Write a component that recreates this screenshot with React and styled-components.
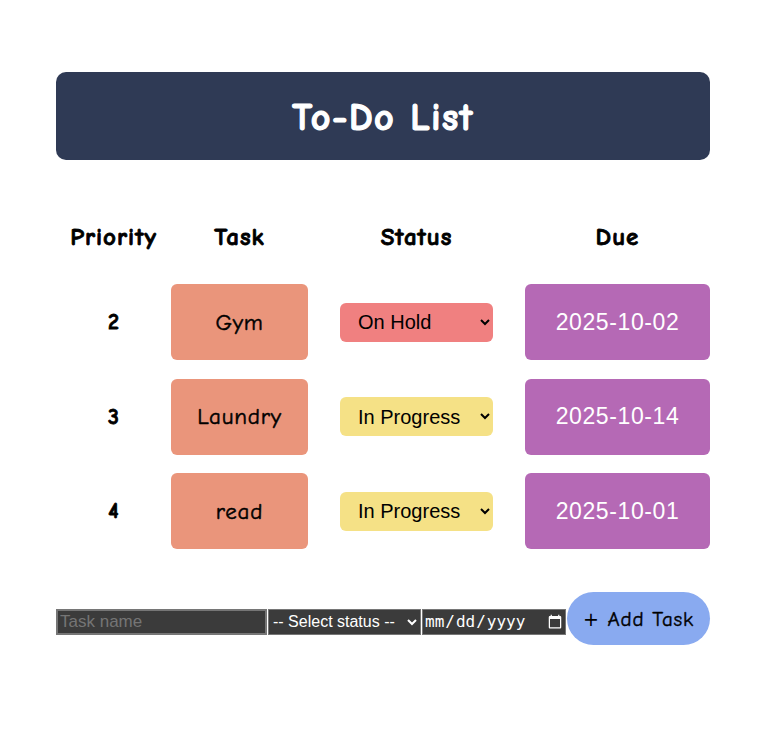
import React, { useState } from "react";
import styled, { createGlobalStyle } from "styled-components";

const comic = `"Comic Sans MS", "Comic Neue", "DejaVu Sans", sans-serif`;
const sans = `"Liberation Sans", Arial, sans-serif`;

const GlobalStyle = createGlobalStyle`
  body {
    margin: 0;
    background: #fff;
    font-family: ${comic};
  }
`;

const statusColors = {
  "On Hold": "#f08080",
  "In Progress": "#f5e186",
  "Done": "#90ee90",
  "Not Started": "#d3d3d3"
};

const initialTasks = [
  { priority: 2, name: "Gym", status: "On Hold", due: "2025-10-02" },
  { priority: 3, name: "Laundry", status: "In Progress", due: "2025-10-14" },
  { priority: 4, name: "read", status: "In Progress", due: "2025-10-01" }
];

export default function App() {
  const [tasks, setTasks] = useState(initialTasks);

  const changeStatus = (idx, value) => {
    setTasks(tasks.map((t, i) => (i === idx ? { ...t, status: value } : t)));
  };

  return (
    <>
      <GlobalStyle />
      <Page>
        <Banner>
          <Title>To-Do List</Title>
        </Banner>
        <HeadRow>
          <HeadCell>Priority</HeadCell>
          <HeadCell>Task</HeadCell>
          <HeadCell>Status</HeadCell>
          <HeadCell>Due</HeadCell>
        </HeadRow>
        <Rows>
          {tasks.map((task, idx) => (
            <Row key={task.name}>
              <Priority>{task.priority}</Priority>
              <TaskCell>{task.name}</TaskCell>
              <StatusCell>
                <StatusSelect
                  $bg={statusColors[task.status]}
                  value={task.status}
                  onChange={(e) => changeStatus(idx, e.target.value)}
                >
                  <option>Not Started</option>
                  <option>In Progress</option>
                  <option>On Hold</option>
                  <option>Done</option>
                </StatusSelect>
              </StatusCell>
              <DueCell>{task.due}</DueCell>
            </Row>
          ))}
        </Rows>
        <Form onSubmit={(e) => e.preventDefault()}>
          <NameInput placeholder="Task name" />
          <FormSelect defaultValue="">
            <option value="">-- Select status --</option>
            <option>Not Started</option>
            <option>In Progress</option>
            <option>On Hold</option>
            <option>Done</option>
          </FormSelect>
          <DateInput type="date" />
          <AddButton type="submit">
            <Plus>+</Plus> Add Task
          </AddButton>
        </Form>
      </Page>
    </>
  );
}

const Page = styled.div`
  width: 654px;
  margin: 72px 0 0 56px;
`;

const Banner = styled.header`
  height: 88px;
  background: #2f3a55;
  border-radius: 10px;
  display: flex;
  align-items: center;
  justify-content: center;
`;

const Title = styled.h1`
  margin: 4px 0 0;
  color: #fff;
  font-family: ${comic};
  font-size: 38px;
  font-weight: bold;
  letter-spacing: 1.5px;
  -webkit-text-stroke: 1.2px #fff;
`;

const grid = `
  display: grid;
  grid-template-columns: 115px 137px 217px 185px;
`;

const HeadRow = styled.div`
  ${grid}
  height: 48px;
  margin: 52px 0 24px;
  align-items: center;
`;

const HeadCell = styled.div`
  text-align: center;
  font-size: 25px;
  font-weight: bold;
  letter-spacing: 1px;
  color: #000;
  -webkit-text-stroke: 0.8px #000;
`;

const Rows = styled.div`
  display: flex;
  flex-direction: column;
  gap: 18.5px;
`;

const Row = styled.div`
  ${grid}
  height: 76px;
`;

const Priority = styled.div`
  display: flex;
  align-items: center;
  justify-content: center;
  font-size: 22px;
  font-weight: bold;
  -webkit-text-stroke: 0.8px #000;
`;

const TaskCell = styled.div`
  display: flex;
  align-items: center;
  justify-content: center;
  background: #ea957b;
  border-radius: 6px;
  font-size: 23px;
  letter-spacing: 0.8px;
  color: #000;
  -webkit-text-stroke: 0.5px #000;
`;

const StatusCell = styled.div`
  display: flex;
  align-items: center;
  justify-content: center;
`;

const StatusSelect = styled.select`
  width: 153px;
  height: 39px;
  padding: 0 8px 0 14px;
  border: none;
  border-radius: 6px;
  background: ${(p) => p.$bg};
  color: #000;
  font-family: ${sans};
  font-size: 20px;
`;

const DueCell = styled.div`
  display: flex;
  align-items: center;
  justify-content: center;
  background: #b569b5;
  border-radius: 6px;
  color: #fff;
  font-family: ${sans};
  font-size: 23px;
  letter-spacing: 0.6px;
`;

const Form = styled.form`
  display: flex;
  align-items: center;
  gap: 1px;
  margin-top: 43px;
`;

const field = `
  box-sizing: border-box;
  height: 26px;
  margin: 6px 0 0;
  color-scheme: dark;
  background: #3b3b3b;
  color: #fff;
  border: 2px solid #767676;
  font-family: "Liberation Sans", Arial, sans-serif;
  font-size: 17px;
`;

const NameInput = styled.input`
  ${field}
  width: 211px;
  padding: 1px 2px;
  &::placeholder {
    color: #757575;
  }
`;

const FormSelect = styled.select`
  ${field}
  width: 153px;
  border-width: 1px;
  font-size: 16px;
`;

const DateInput = styled.input`
  ${field}
  width: 144px;
  border-width: 1px;
  font-family: "DejaVu Sans Mono", monospace;
  font-size: 16px;
`;

const AddButton = styled.button`
  width: 143px;
  height: 53px;
  border: none;
  border-radius: 27px;
  background: #89aaf0;
  color: #000;
  font-family: ${comic};
  font-size: 21px;
  letter-spacing: 0.8px;
  -webkit-text-stroke: 0.4px #000;
  cursor: pointer;
`;

const Plus = styled.span`
  font-family: "DejaVu Sans", sans-serif;
  font-size: 19px;
  -webkit-text-stroke: 0;
`;
